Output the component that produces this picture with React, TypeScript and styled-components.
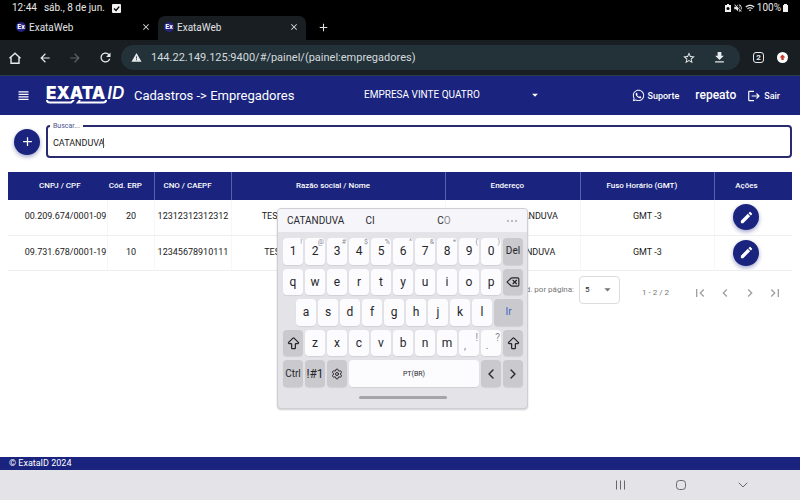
import React, { useState } from "react";
import styled, { createGlobalStyle, css } from "styled-components";
import {
  MdAdd,
  MdArrowBack,
  MdArrowDropDown,
  MdArrowForward,
  MdChevronLeft,
  MdChevronRight,
  MdClose,
  MdDownload,
  MdEdit,
  MdFirstPage,
  MdLastPage,
  MdLogout,
  MdRefresh,
  MdStarOutline,
  MdViewHeadline,
  MdVolumeOff,
  MdWarning,
  MdWifi,
} from "react-icons/md";
import { FaWhatsapp } from "react-icons/fa";
import { ArrowBigUp, Delete, ChevronLeft, ChevronRight, ChevronDown, Settings } from "lucide-react";

const navy = "#1a237e";

const GlobalStyle = createGlobalStyle`
  * { box-sizing: border-box; }
  body { margin: 0; background: #fff; font-family: Roboto, "Liberation Sans", sans-serif; color: #212121; }
  button, input, select { font: inherit; color: inherit; margin: 0; }
  button { border: 0; padding: 0; background: none; cursor: pointer; }
  svg { display: block; flex: none; }
`;

const Screen = styled.div`
  position: relative;
  min-height: 100vh;
  display: flex;
  flex-direction: column;
`;

/* ---------- device and browser bars ---------- */

const StatusBar = styled.div`
  height: 16px;
  padding: 0 12px;
  display: flex;
  align-items: center;
  gap: 7px;
  background: #000;
  color: #e8e8e8;
  font-size: 10px;
  line-height: 16px;
`;

const StatusIcons = styled.div`
  margin-left: auto;
  display: flex;
  align-items: center;
  gap: 2px;
`;

const TabStrip = styled.div`
  height: 24px;
  padding-left: 10px;
  display: flex;
  background: #000;
`;

const Tab = styled.div<{ $active?: boolean }>`
  width: 148px;
  padding: 0 7px 2px 6px;
  display: flex;
  align-items: center;
  gap: 3px;
  border-radius: 7px 7px 0 0;
  background: ${(p) => (p.$active ? "#191e22" : "transparent")};
  color: #e1e3e5;
  font-size: 10px;
`;

const TabName = styled.span`
  flex: 1;
`;

const Favicon = styled.span`
  width: 10px;
  height: 10px;
  border-radius: 5px;
  background: #25237c;
  color: #fff;
  font-size: 7px;
  font-weight: 700;
  line-height: 10px;
  text-align: center;
`;

const IconButton = styled.button`
  display: flex;
  align-items: center;
  justify-content: center;
`;

const NewTab = styled(IconButton)`
  width: 34px;
  padding-bottom: 2px;
  color: #e1e3e5;
`;

const Toolbar = styled.div`
  height: 36px;
  padding: 0 12px 0 8px;
  display: flex;
  align-items: center;
  gap: 13px;
  background: #191e22;
  border-bottom: 1px solid #2d3a48;
  color: #e6eaec;
`;

const NavIcons = styled.div`
  display: flex;
  gap: 16px;
  margin-right: -5px;
`;

const AddressBar = styled.div`
  flex: 1;
  height: 25px;
  padding: 0 13px 0 10px;
  display: flex;
  align-items: center;
  gap: 9px;
  border-radius: 13px;
  background: #233238;
`;

const AddressInput = styled.input`
  flex: 1;
  min-width: 0;
  border: 0;
  padding: 0;
  outline: 0;
  background: none;
  color: #d3dade;
  font-size: 11px;
`;

const AddressActions = styled.div`
  display: flex;
  gap: 16px;
`;

const TabCount = styled.button`
  width: 11px;
  height: 11px;
  border: 1px solid #e6eaec;
  border-radius: 3px;
  font-size: 8px;
  font-weight: 700;
  line-height: 9px;
`;

/* ---------- application ---------- */

const AppHeader = styled.header`
  height: 39px;
  padding: 0 20px 0 16px;
  display: flex;
  align-items: center;
  background: ${navy};
  color: #fff;
`;

const Logo = styled.a`
  margin: 0 9px 0 15px;
  padding-bottom: 1px;
  width: 79px;
  display: flex;
  flex-direction: column;
  color: #fff;
  text-decoration: none;
`;

const LogoText = styled.span`
  display: flex;
  align-items: baseline;
  gap: 2px;
  font-family: Inter, sans-serif;
  font-size: 17px;
  font-weight: 900;
  line-height: 14px;
`;

const LogoSuffix = styled.span`
  font-weight: 600;
  font-style: italic;
`;

const Title = styled.h1`
  margin: 0;
  width: 155px;
  font-size: 13px;
  font-weight: 400;
  white-space: nowrap;
`;

const CompanyField = styled.div`
  width: 178px;
  margin: 0 auto 2px 75px;
  display: flex;
  align-items: center;
`;

const CompanySelect = styled.select`
  flex: 1;
  appearance: none;
  border: 0;
  outline: 0;
  background: none;
  padding: 0;
  font-size: 10px;
`;

const HeaderAction = styled.button`
  display: flex;
  align-items: center;
  gap: 3px;
  font-size: 9px;
  font-weight: 500;
`;

const UserName = styled.span`
  margin: 0 11px 2px 16px;
  font-size: 12px;
  font-weight: 500;
`;

const Main = styled.main`
  flex: 1;
  padding: 10px 8px 0;
`;

const SearchRow = styled.div`
  display: flex;
  align-items: center;
  gap: 6px;
  padding-left: 6px;
`;

const RoundButton = styled(IconButton)`
  width: 26px;
  height: 26px;
  flex: none;
  border-radius: 50%;
  background: ${navy};
  color: #fff;
  box-shadow: 0 2px 4px rgba(26, 35, 126, 0.4);
`;

const SearchField = styled.label`
  position: relative;
  flex: 1;
  height: 33px;
  padding: 3px 5px 0;
  display: flex;
  align-items: center;
  border: 2px solid #292b6e;
  border-radius: 4px;
  cursor: text;
`;

const SearchLabel = styled.span`
  position: absolute;
  left: 2px;
  top: -5px;
  padding: 0 3px;
  background: #fff;
  color: #4d5488;
  font-size: 7px;
  line-height: 9px;
`;

const SearchInput = styled.input`
  field-sizing: content;
  border: 0;
  padding: 0;
  outline: 0;
  background: none;
  font-size: 9px;
  caret-color: transparent;
`;

const Caret = styled.span`
  width: 1px;
  height: 10px;
  margin-left: -2px;
  background: #555;
`;

const Table = styled.table`
  width: 100%;
  margin-top: 14px;
  border-collapse: collapse;
  table-layout: fixed;
`;

const Col = styled.col<{ $share: number }>`
  width: ${(p) => p.$share}%;
`;

const HeadCell = styled.th<{ $line?: boolean }>`
  height: 28px;
  padding: 0 11px 2px 0;
  background: ${navy};
  border-right: ${(p) => (p.$line ? "1px solid #5a60a3" : "0")};
  color: #fff;
  font-size: 8px;
  font-weight: 500;
  white-space: nowrap;

  &:first-child {
    padding-left: 15px;
  }
  &:last-child {
    padding-right: 14px;
  }
`;

const Cell = styled.td`
  height: 35px;
  padding: 0 0 2px;
  border-bottom: 1px solid #eeeeee;
  border-right: 1px solid #f7f7f7;
  font-size: 9px;
  text-align: center;
  white-space: nowrap;

  &:first-child {
    padding-left: 16px;
  }
  &:last-child {
    padding: 0 14px 0 0;
    border-right: 0;
  }
`;

const CellButton = styled(RoundButton)`
  margin: 0 auto;
`;

const Paginator = styled.div`
  padding: 5px 9px 0 0;
  display: flex;
  align-items: center;
  justify-content: flex-end;
  color: #757575;
  font-size: 8px;
`;

const PageSize = styled.label`
  display: flex;
  align-items: center;
  gap: 5px;
`;

const PageSelectBox = styled.span`
  width: 41px;
  height: 28px;
  padding: 0 4px 0 5px;
  display: flex;
  align-items: center;
  border: 1px solid #dcdcdc;
  border-radius: 4px;
`;

const PageSelect = styled.select`
  flex: 1;
  min-width: 0;
  appearance: none;
  border: 0;
  outline: 0;
  padding: 0;
  background: none;
  color: #212121;
`;

const PageRange = styled.span`
  margin: 5px 23px 0 22px;
`;

const PageButtons = styled.div`
  margin-top: 6px;
  display: flex;
  gap: 9px;
  color: #a0a0a0;
`;

const Footer = styled.footer`
  height: 13px;
  padding-left: 9px;
  background: ${navy};
  color: #fff;
  font-size: 9px;
  line-height: 12px;
`;

const SystemNav = styled.nav`
  height: 30px;
  padding-right: 49px;
  display: flex;
  align-items: center;
  justify-content: flex-end;
  gap: 47px;
  background: #e4e3e8;
  color: #66666b;
`;

/* ---------- floating keyboard ---------- */

const Keyboard = styled.section`
  position: absolute;
  left: 277px;
  top: 208px;
  width: 251px;
  border: 1px solid #cfced4;
  border-radius: 4px;
  background: #e4e3e8;
  box-shadow: 0 1px 2px rgba(0, 0, 0, 0.2);
  overflow: hidden;
`;

const Suggestions = styled.div`
  height: 23px;
  padding: 0 9px;
  display: grid;
  grid-template-columns: 60px 46px 102px 1fr;
  align-items: center;
  background: #f6f5fa;
  color: #2a2a2e;
  font-size: 10px;
`;

const Suggestion = styled.button<{ $first?: boolean }>`
  text-align: ${(p) => (p.$first ? "left" : "center")};
`;

const MoreButton = styled(IconButton)`
  justify-content: flex-end;
`;

const Faded = styled.span`
  color: #8a8a90;
`;

const KeyRows = styled.div`
  height: 155px;
  padding: 6px 6px 0 5px;
  display: grid;
  grid-template-rows: repeat(5, 1fr);
  gap: 4px;
`;

const KeyRow = styled.div<{ $indent?: boolean }>`
  display: flex;
  gap: 2px;
  padding-left: ${(p) => (p.$indent ? "13px" : "0")};
`;

type KeyKind = "letter" | "tool" | "enter" | "space";

const KeyCap = styled.button<{ $kind: KeyKind; $small?: boolean }>`
  position: relative;
  width: 20px;
  display: flex;
  align-items: center;
  justify-content: center;
  border-radius: 4px;
  background: #fcfcff;
  color: #26262a;
  font-size: ${(p) => (p.$small ? "10px" : "12px")};
  line-height: 12px;
  box-shadow: 0 1px 1px rgba(0, 0, 0, 0.08);
  white-space: nowrap;

  ${(p) =>
    (p.$kind === "tool" || p.$kind === "enter") &&
    css`
      background: #cac9ce;
    `}
  ${(p) =>
    p.$kind === "enter" &&
    css`
      flex: 1;
      color: #3a62c0;
      font-size: 10px;
    `}
  ${(p) =>
    p.$kind === "space" &&
    css`
      flex: 1;
      font-size: 7px;
    `}
`;

const Hint = styled.span<{ $large?: boolean }>`
  position: absolute;
  top: ${(p) => (p.$large ? "2px" : "0")};
  right: 1px;
  color: #8a8a90;
  font-size: ${(p) => (p.$large ? "10px" : "7px")};
  line-height: ${(p) => (p.$large ? "12px" : "8px")};
`;

const Punctuation = styled.span`
  margin-top: 6px;
  margin-right: 8px;
  color: #77777c;
  font-size: 10px;
`;

const Handle = styled.div`
  width: 88px;
  height: 3px;
  margin: 9px auto 9px;
  border-radius: 2px;
  background: #a5a4aa;
`;

const employers = [
  { doc: "00.209.674/0001-09", erp: "20", cno: "12312312312312", name: "TESTE EMPREGADOR CATANDUVA 01", address: "RUA 100, CATANDUVA" },
  { doc: "09.731.678/0001-19", erp: "10", cno: "12345678910111", name: "TESTE EMPREGADOR CATANDUVA 2", address: "RUA 10, CATANDUVA" },
];

const columns = [
  { name: "CNPJ / CPF", share: 12.7, line: false },
  { name: "Cód. ERP", share: 6, line: true },
  { name: "CNO / CAEPF", share: 9.8, line: true },
  { name: "Razão social / Nome", share: 27.3, line: true },
  { name: "Endereço", share: 17.2, line: true },
  { name: "Fuso Horário (GMT)", share: 17.1, line: true },
  { name: "Ações", share: 9.9, line: false },
];

const digits = ["1!", "2@", "3#", "4$", "5%", "6^", "7&", "8*", "9(", "0)"];

const Letters = ({ keys }: { keys: string }) => (
  <>
    {keys.split("").map((k) => (
      <KeyCap key={k} $kind="letter">
        {k}
      </KeyCap>
    ))}
  </>
);

const TouchKeyboard = () => (
  <Keyboard aria-label="Teclado">
    <Suggestions>
      <Suggestion $first>CATANDUVA</Suggestion>
      <Suggestion>CI</Suggestion>
      <Suggestion>
        C<Faded>O</Faded>
      </Suggestion>
      <MoreButton aria-label="Mais opções">
        <svg width="12" height="4" viewBox="0 0 12 4" fill="#aaaab0">
          <circle cx="2" cy="2" r="1" />
          <circle cx="6" cy="2" r="1" />
          <circle cx="10" cy="2" r="1" />
        </svg>
      </MoreButton>
    </Suggestions>
    <KeyRows>
      <KeyRow>
        {digits.map((d) => (
          <KeyCap key={d} $kind="letter">
            {d[0]}
            <Hint>{d[1]}</Hint>
          </KeyCap>
        ))}
        <KeyCap $kind="tool" $small>Del</KeyCap>
      </KeyRow>
      <KeyRow>
        <Letters keys="qwertyuiop" />
        <KeyCap $kind="tool" aria-label="Apagar">
          <Delete size={14} strokeWidth={2} />
        </KeyCap>
      </KeyRow>
      <KeyRow $indent>
        <Letters keys="asdfghjkl" />
        <KeyCap $kind="enter">Ir</KeyCap>
      </KeyRow>
      <KeyRow>
        <KeyCap $kind="tool" aria-label="Maiúsculas">
          <ArrowBigUp size={15} strokeWidth={2} />
        </KeyCap>
        <Letters keys="zxcvbnm" />
        <KeyCap $kind="letter">
          <Punctuation>,</Punctuation>
          <Hint $large>!</Hint>
        </KeyCap>
        <KeyCap $kind="letter">
          <Punctuation>.</Punctuation>
          <Hint $large>?</Hint>
        </KeyCap>
        <KeyCap $kind="tool" aria-label="Maiúsculas">
          <ArrowBigUp size={15} strokeWidth={2} />
        </KeyCap>
      </KeyRow>
      <KeyRow>
        <KeyCap $kind="tool" $small>Ctrl</KeyCap>
        <KeyCap $kind="tool">!#1</KeyCap>
        <KeyCap $kind="tool" aria-label="Configurações">
          <Settings size={12} strokeWidth={2} />
        </KeyCap>
        <KeyCap $kind="space">PT(BR)</KeyCap>
        <KeyCap $kind="tool" aria-label="Esquerda">
          <ChevronLeft size={16} strokeWidth={2} />
        </KeyCap>
        <KeyCap $kind="tool" aria-label="Direita">
          <ChevronRight size={16} strokeWidth={2} />
        </KeyCap>
      </KeyRow>
    </KeyRows>
    <Handle />
  </Keyboard>
);

export default function App() {
  const [search, setSearch] = useState("CATANDUVA");
  const [url, setUrl] = useState("144.22.149.125:9400/#/painel/(painel:empregadores)");

  return (
    <Screen>
      <GlobalStyle />
      <StatusBar>
        <span>12:44</span>
        <span>sáb., 8 de jun.</span>
        <svg width="9" height="9" viewBox="0 0 9 9">
          <rect width="9" height="9" rx="1" fill="#f2f2f2" />
          <path d="M2 4.5 4 6.4 7.2 2.6" fill="none" stroke="#000" strokeWidth="1.4" />
        </svg>
        <StatusIcons>
          <svg width="6" height="8" viewBox="0 0 6 8">
            <path d="M2 0h2v1h2v7H0V1h2z" fill="#f2f2f2" />
            <circle cx="3" cy="4.5" r="1.5" fill="#000" />
          </svg>
          <MdVolumeOff size={10} />
          <MdWifi size={10} />
          <span>100%</span>
          <svg width="5" height="8" viewBox="0 0 5 8">
            <path d="M1 0h3v1h1v7H0V1h1z" fill="#f2f2f2" />
          </svg>
        </StatusIcons>
      </StatusBar>

      <TabStrip>
        <Tab>
          <Favicon>Ex</Favicon>
          <TabName>ExataWeb</TabName>
          <IconButton aria-label="Fechar guia">
            <MdClose size={10} />
          </IconButton>
        </Tab>
        <Tab $active>
          <Favicon>Ex</Favicon>
          <TabName>ExataWeb</TabName>
          <IconButton aria-label="Fechar guia">
            <MdClose size={10} />
          </IconButton>
        </Tab>
        <NewTab aria-label="Nova guia">
          <MdAdd size={13} />
        </NewTab>
      </TabStrip>

      <Toolbar>
        <NavIcons>
          <IconButton aria-label="Início">
            <svg width="14" height="14" viewBox="0 0 14 14" fill="none" stroke="currentColor" strokeWidth="1.4">
              <path d="M1.500 7.200 7 2.200l5.500 5M3 6v6.200h8V6" />
            </svg>
          </IconButton>
          <IconButton aria-label="Voltar">
            <MdArrowBack size={14} />
          </IconButton>
          <IconButton aria-label="Avançar" disabled>
            <MdArrowForward size={14} color="#5d6367" />
          </IconButton>
          <IconButton aria-label="Recarregar">
            <MdRefresh size={15} />
          </IconButton>
        </NavIcons>
        <AddressBar>
          <MdWarning size={11} />
          <AddressInput aria-label="Endereço da página" value={url} onChange={(e) => setUrl(e.target.value)} />
          <AddressActions>
            <IconButton aria-label="Favoritar">
              <MdStarOutline size={14} />
            </IconButton>
            <IconButton aria-label="Baixar">
              <MdDownload size={15} />
            </IconButton>
          </AddressActions>
        </AddressBar>
        <TabCount aria-label="2 guias">2</TabCount>
        <IconButton aria-label="Atualizar navegador">
          <svg width="11" height="11" viewBox="0 0 11 11">
            <circle cx="5.500" cy="5.500" r="5.500" fill="#fff" />
            <path d="M5.500 2.500 8.500 5.600H6.700V8H4.300V5.600H2.500z" fill="#c5362d" />
          </svg>
        </IconButton>
      </Toolbar>

      <AppHeader>
        <IconButton aria-label="Menu">
          <MdViewHeadline size={15} />
        </IconButton>
        <Logo href="#" aria-label="ExataID">
          <LogoText>
            EXATA<LogoSuffix>ID</LogoSuffix>
          </LogoText>
          <svg width="62" height="4" viewBox="0 0 62 4" fill="none" stroke="#fff" strokeWidth="2">
            <path d="M1 0Q1 2.500 4 2.500H25L28 0M34 0L32 2.500H57Q60 2.500 60 0" />
          </svg>
        </Logo>
        <Title>Cadastros -&gt; Empregadores</Title>
        <CompanyField>
          <CompanySelect aria-label="Empresa">
            <option>EMPRESA VINTE QUATRO</option>
          </CompanySelect>
          <MdArrowDropDown size={14} />
        </CompanyField>
        <HeaderAction>
          <FaWhatsapp size={13} />
          Suporte
        </HeaderAction>
        <UserName>repeato</UserName>
        <HeaderAction>
          <MdLogout size={14} />
          Sair
        </HeaderAction>
      </AppHeader>

      <Main>
        <SearchRow>
          <RoundButton aria-label="Adicionar">
            <MdAdd size={15} />
          </RoundButton>
          <SearchField>
            <SearchLabel>Buscar...</SearchLabel>
            <SearchInput value={search} onChange={(e) => setSearch(e.target.value)} />
            <Caret />
          </SearchField>
        </SearchRow>

        <Table>
          <colgroup>
            {columns.map((c) => (
              <Col key={c.name} $share={c.share} />
            ))}
          </colgroup>
          <thead>
            <tr>
              {columns.map((c) => (
                <HeadCell key={c.name} $line={c.line} scope="col">
                  {c.name}
                </HeadCell>
              ))}
            </tr>
          </thead>
          <tbody>
            {employers.map((e) => (
              <tr key={e.doc}>
                <Cell>{e.doc}</Cell>
                <Cell>{e.erp}</Cell>
                <Cell>{e.cno}</Cell>
                <Cell>{e.name}</Cell>
                <Cell>{e.address}</Cell>
                <Cell>GMT -3</Cell>
                <Cell>
                  <CellButton aria-label="Editar">
                    <MdEdit size={15} />
                  </CellButton>
                </Cell>
              </tr>
            ))}
          </tbody>
        </Table>

        <Paginator>
          <PageSize>
            Qtd. por página:
            <PageSelectBox>
              <PageSelect>
                <option>5</option>
              </PageSelect>
              <MdArrowDropDown size={15} />
            </PageSelectBox>
          </PageSize>
          <PageRange>1 - 2 / 2</PageRange>
          <PageButtons>
            <IconButton aria-label="Primeira página">
              <MdFirstPage size={16} />
            </IconButton>
            <IconButton aria-label="Página anterior">
              <MdChevronLeft size={16} />
            </IconButton>
            <IconButton aria-label="Próxima página">
              <MdChevronRight size={16} />
            </IconButton>
            <IconButton aria-label="Última página">
              <MdLastPage size={16} />
            </IconButton>
          </PageButtons>
        </Paginator>
      </Main>

      <Footer>© ExataID 2024</Footer>

      <SystemNav aria-label="Sistema">
        <IconButton aria-label="Recentes">
          <svg width="14" height="12" viewBox="0 0 14 12" stroke="currentColor" strokeWidth="1">
            <path d="M3.500 1.500v9M7.500 1.500v9M11.500 1.500v9" />
          </svg>
        </IconButton>
        <IconButton aria-label="Tela inicial">
          <svg width="14" height="12" viewBox="0 0 14 12" fill="none" stroke="currentColor">
            <rect x="2.500" y="1.500" width="9" height="9" rx="3" />
          </svg>
        </IconButton>
        <IconButton aria-label="Ocultar teclado">
          <ChevronDown size={16} strokeWidth={1.500} />
        </IconButton>
      </SystemNav>

      <TouchKeyboard />
    </Screen>
  );
}
